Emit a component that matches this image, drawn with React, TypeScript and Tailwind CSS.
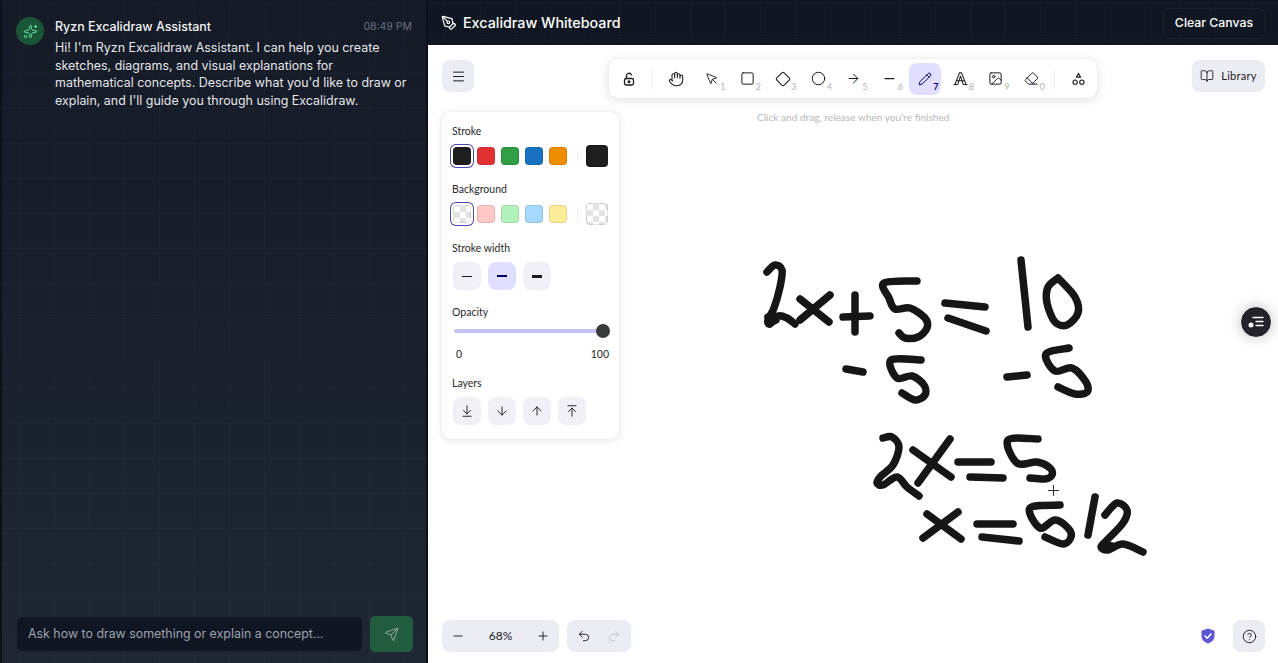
import React from 'react';
import {
  ArrowDown,
  ArrowDownToLine,
  ArrowRight,
  ArrowUp,
  ArrowUpToLine,
  BookOpen,
  Circle,
  CircleHelp,
  Diamond,
  Eraser,
  Hand,
  Image,
  Menu,
  Minus,
  MousePointer,
  PenTool,
  Pencil,
  Plus,
  Redo2,
  Send,
  Sparkles,
  Square,
  Undo2,
} from 'lucide-react';

type Pt = [number, number];

// handwriting strokes, in page coordinates
const STROKES: Pt[][] = [
  [[767, 272], [775, 265], [782, 270], [780, 287], [774, 308], [768, 320], [770, 324], [778, 316], [787, 318], [795, 324]],
  [[768, 317], [771, 322], [776, 320]],
  [[800, 320], [830, 295]],
  [[800, 299], [829, 322]],
  [[843, 317], [870, 316]],
  [[855, 295], [855, 332]],
  [[917, 281], [884, 283], [889, 298], [895, 309], [910, 308], [925, 318], [927, 328], [918, 337], [905, 338], [899, 333]],
  [[945, 303], [985, 307]],
  [[948, 318], [986, 331]],
  [[1021, 260], [1028, 327]],
  [[1058, 278], [1075, 297], [1078, 313], [1067, 325], [1055, 322], [1047, 303], [1048, 287], [1058, 278]],
  [[846, 369], [863, 372]],
  [[921, 360], [891, 360], [897, 378], [912, 376], [924, 385], [925, 395], [915, 400], [902, 393]],
  [[1007, 377], [1027, 375]],
  [[1069, 348], [1046, 354], [1055, 371], [1072, 368], [1086, 382], [1087, 392], [1075, 394], [1058, 387]],
  [[883, 438], [892, 437], [899, 447], [893, 465], [881, 476], [877, 483], [883, 485], [897, 477], [907, 487], [919, 496]],
  [[950, 439], [918, 483]],
  [[913, 450], [951, 477]],
  [[958, 462], [991, 462]],
  [[970, 477], [1003, 478]],
  [[1038, 439], [1008, 440], [1017, 463], [1037, 462], [1050, 468], [1052, 475], [1045, 479], [1030, 478]],
  [[958, 512], [923, 538]],
  [[927, 514], [961, 539]],
  [[977, 524], [1013, 524]],
  [[982, 537], [1019, 541]],
  [[1060, 505], [1030, 508], [1040, 528], [1055, 520], [1068, 528], [1071, 537], [1063, 544], [1045, 537]],
  [[1095, 497], [1088, 535]],
  [[1105, 515], [1117, 503], [1127, 510], [1123, 523], [1107, 540], [1101, 547], [1108, 550], [1123, 544], [1143, 552]],
  [[1103, 545], [1112, 546]],
];

// catmull-rom through the points, keeps the hand drawn look
function toPath(pts: Pt[]) {
  let d = `M${pts[0][0]} ${pts[0][1]}`;
  for (let i = 0; i < pts.length - 1; i++) {
    const p0 = pts[i - 1] ?? pts[i];
    const p1 = pts[i];
    const p2 = pts[i + 1];
    const p3 = pts[i + 2] ?? p2;
    const c1x = p1[0] + (p2[0] - p0[0]) / 6;
    const c1y = p1[1] + (p2[1] - p0[1]) / 6;
    const c2x = p2[0] - (p3[0] - p1[0]) / 6;
    const c2y = p2[1] - (p3[1] - p1[1]) / 6;
    d += ` C${c1x} ${c1y} ${c2x} ${c2y} ${p2[0]} ${p2[1]}`;
  }
  return d;
}

const LockIcon = () => (
  <svg width="14" height="14" viewBox="0 0 14 14" fill="none" stroke="currentColor" strokeWidth="1.3" strokeLinecap="round" strokeLinejoin="round">
    <rect x="2.500" y="6.500" width="9" height="6.500" rx="1.800" />
    <circle cx="7" cy="9.700" r="0.900" />
    <path d="M4.500 6.500V3.800a2.500 2.500 0 0 1 4.800-1" />
  </svg>
);

const TextIcon = () => (
  <svg width="15" height="15" viewBox="0 0 16 16" fill="none" stroke="currentColor" strokeWidth="1.1" strokeLinecap="round" strokeLinejoin="round">
    <path d="M2 14.500 7 1.800h2l5 12.700" />
    <path d="M5 14.500 8 5.500l3 9" />
    <path d="M4 10.500h8" />
    <path d="M1 14.500h3M12 14.500h3" />
  </svg>
);

const ShapesIcon = () => (
  <svg width="13" height="14" viewBox="0 0 14 14" fill="none" stroke="currentColor" strokeWidth="1.2" strokeLinejoin="round">
    <path d="M7 1 9.200 5H4.800z" />
    <circle cx="3.400" cy="10.400" r="2.300" />
    <circle cx="10.600" cy="10.400" r="2.300" />
  </svg>
);

const TOOLS: { icon: React.ReactNode; key?: string; active?: boolean }[] = [
  { icon: <Hand size={16} strokeWidth={1.6} /> },
  { icon: <MousePointer size={14} strokeWidth={1.6} />, key: '1' },
  { icon: <Square size={15} strokeWidth={1.6} />, key: '2' },
  { icon: <Diamond size={16} strokeWidth={1.6} />, key: '3' },
  { icon: <Circle size={15} strokeWidth={1.6} />, key: '4' },
  { icon: <ArrowRight size={15} strokeWidth={1.6} />, key: '5' },
  { icon: <Minus size={15} strokeWidth={2} />, key: '6' },
  { icon: <Pencil size={14} strokeWidth={1.7} />, key: '7', active: true },
  { icon: <TextIcon />, key: '8' },
  { icon: <Image size={15} strokeWidth={1.6} />, key: '9' },
  { icon: <Eraser size={15} strokeWidth={1.6} />, key: '0' },
];

const STROKE_COLORS = ['bg-[#1e1e1e]', 'bg-[#e03131]', 'bg-[#2f9e44]', 'bg-[#1971c2]', 'bg-[#f08c00]'];
const BG_COLORS = ['bg-[#ffc9c9]', 'bg-[#b2f2bb]', 'bg-[#a5d8ff]', 'bg-[#ffec99]'];

const checker = 'bg-[repeating-conic-gradient(#e3e3e3_0_25%,#ffffff_0_50%)] bg-[size:12px_12px]';

const Swatch = ({ className, selected }: { className: string; selected?: boolean }) => (
  <div className={`flex h-[22px] w-[22px] items-center justify-center rounded-[5px] ${selected ? 'ring-1 ring-[#4a47b1]' : ''}`}>
    <div className={`h-[18px] w-[18px] rounded-[4px] border border-black/10 ${className}`} />
  </div>
);

const SquareBtn = ({ children, active }: { children: React.ReactNode; active?: boolean }) => (
  <div className={`flex h-7 w-7 items-center justify-center rounded-lg ${active ? 'bg-[#e0dfff] text-[#030064]' : 'bg-[#f1f0f6] text-[#1b1b1f]'}`}>
    {children}
  </div>
);

const Label = ({ children }: { children: React.ReactNode }) => (
  <div className="text-[10.500px] leading-4 text-[#2a2a2e]">{children}</div>
);

export default function App() {
  return (
    <div className="flex h-screen w-full overflow-hidden bg-white font-['Inter',sans-serif]">
      {/* Chat side */}
      <aside className="flex w-[428px] shrink-0 flex-col border-x-2 border-l-[#0d1119] border-r-[#0b0f17] bg-[linear-gradient(rgba(255,255,255,0.025)_1px,transparent_1px),linear-gradient(90deg,rgba(255,255,255,0.025)_1px,transparent_1px),linear-gradient(180deg,#141a26,#1f2734)] bg-[size:35px_35px,35px_35px,100%_100%] bg-[position:17px_3px,17px_3px,0_0]">
        <div className="flex flex-1 gap-[10px] pl-[14px] pr-[14px] pt-[17px]">
          <div className="flex h-7 w-7 shrink-0 items-center justify-center rounded-full bg-[#1a5537] text-[#5fe39b]">
            <Sparkles size={15} strokeWidth={1.6} />
          </div>
          <div className="min-w-0 flex-1 pl-[1px]">
            <div className="mt-[1px] flex items-center justify-between">
              <span className="text-[12.450px] font-medium leading-[18px] text-[#f3f4f6]">Ryzn Excalidraw Assistant</span>
              <span className="text-[10.500px] leading-[18px] text-[#6b7280]">08:49 PM</span>
            </div>
            <p className="mt-[3px] text-[12.450px] leading-[17.600px] text-[#e5e7eb]">
              Hi! I'm Ryzn Excalidraw Assistant. I can help you create sketches, diagrams, and visual explanations for mathematical concepts. Describe what you'd like to draw or explain, and I'll guide you through using Excalidraw.
            </p>
          </div>
        </div>
        <div className="flex items-center gap-2 pb-[11px] pl-[15px] pr-[13px]">
          <div className="flex h-[34px] flex-1 items-center rounded-[5px] bg-[#111623] pl-[11px] text-[12.400px] text-[#9ca3af]">
            Ask how to draw something or explain a concept...
          </div>
          <button className="flex h-9 w-[43px] items-center justify-center rounded-[5px] bg-[#215c3e] text-[#93a89c]">
            <Send size={15} strokeWidth={1.6} />
          </button>
        </div>
      </aside>

      <main className="flex min-w-0 flex-1 flex-col">
        <header className="flex h-[45px] shrink-0 items-center justify-between bg-[#111722] bg-[linear-gradient(rgba(255,255,255,0.025)_1px,transparent_1px),linear-gradient(90deg,rgba(255,255,255,0.025)_1px,transparent_1px)] bg-[size:35px_35px] bg-[position:17px_3px] pl-[13px] pr-[13px]">
          <div className="mt-[1px] flex items-center gap-[6px] text-white">
            <PenTool size={16} strokeWidth={1.8} />
            <span className="text-[14.300px] font-medium">Excalidraw Whiteboard</span>
          </div>
          <button className="mt-[2px] h-[31px] w-[102px] rounded-[5px] border border-[#1c2330] text-[12.300px] font-medium text-white">Clear Canvas</button>
        </header>

        {/* Canvas */}
        <div className="relative flex min-h-0 flex-1 flex-col bg-white pb-[11px] pl-[14px] pr-[13px] pt-[15px] font-['Lato',sans-serif]">
          <svg className="pointer-events-none absolute left-[-428px] top-[-45px]" width="1278" height="663" fill="none">
            {STROKES.map((s, i) => (
              <path key={i} d={toPath(s)} stroke="#161616" strokeWidth="7.500" strokeLinecap="round" strokeLinejoin="round" />
            ))}
            <path d="M1053.500 485v11M1048 490.500h11" stroke="#333" strokeWidth="1" />
          </svg>

          <div className="relative flex items-start">
            <div className="flex h-8 w-8 items-center justify-center rounded-lg bg-[#ececf4] text-[#1b1b1f]">
              <Menu size={15} strokeWidth={1.6} />
            </div>
            <div className="ml-[135px] mt-[-1px] flex h-[39px] w-[488px] items-center rounded-lg bg-white pl-1 shadow-[0_2px_12px_rgba(0,0,0,0.12),0_0_1px_rgba(0,0,0,0.18)]">
              <div className="flex h-8 w-8 items-center justify-center text-[#1b1b1f]">
                <LockIcon />
              </div>
              <div className="mx-[7px] h-5 w-px bg-[#eeeef5]" />
              <div className="flex gap-[3.500px]">
                {TOOLS.map((t, i) => (
                  <div key={i} className={`relative flex h-8 w-8 items-center justify-center rounded-lg ${t.active ? 'bg-[#e0dfff] text-[#030064]' : 'text-[#1b1b1f]'}`}>
                    {t.icon}
                    {t.key && (
                      <span className={`absolute bottom-[2px] right-[2px] text-[9px] leading-3 ${t.active ? 'font-bold text-[#030064]' : 'text-[#b3b3b3]'}`}>{t.key}</span>
                    )}
                  </div>
                ))}
              </div>
              <div className="mx-[7px] h-5 w-px bg-[#eeeef5]" />
              <div className="flex h-8 w-8 items-center justify-center text-[#1b1b1f]">
                <ShapesIcon />
              </div>
            </div>
            <div className="ml-auto flex h-8 w-[73px] items-center justify-center gap-[7px] rounded-lg bg-[#ececf4] text-[11px] tracking-[0.3px] text-[#1b1b1f]">
              <BookOpen size={14} strokeWidth={1.5} />
              <span>Library</span>
            </div>
          </div>

          <div className="relative mt-[14px] flex flex-1 items-start">
            <div className="w-[177px] rounded-lg bg-white px-[10px] pb-[14px] pt-[11px] shadow-[0_1px_8px_rgba(0,0,0,0.1),0_0_1px_rgba(0,0,0,0.16)]">
              <Label>Stroke</Label>
              <div className="ml-[-1px] mt-[6px] flex items-center gap-[2px]">
                <Swatch className={STROKE_COLORS[0]} selected />
                {STROKE_COLORS.slice(1).map((c) => (
                  <Swatch key={c} className={c} />
                ))}
                <div className="mx-[6px] h-4 w-px bg-[#eeeef5]" />
                <div className="h-[22px] w-[22px] rounded-[4px] border border-black/10 bg-[#1e1e1e]" />
              </div>
              <div className="mt-[14px]">
                <Label>Background</Label>
              </div>
              <div className="ml-[-1px] mt-[6px] flex items-center gap-[2px]">
                <Swatch className={checker} selected />
                {BG_COLORS.map((c) => (
                  <Swatch key={c} className={c} />
                ))}
                <div className="mx-[6px] h-4 w-px bg-[#eeeef5]" />
                <div className={`h-[22px] w-[22px] rounded-[4px] border border-black/10 ${checker}`} />
              </div>
              <div className="mt-[15px]">
                <Label>Stroke width</Label>
              </div>
              <div className="ml-[1px] mt-[6px] flex gap-[7px]">
                <SquareBtn><div className="h-px w-[10px] bg-current" /></SquareBtn>
                <SquareBtn active><div className="h-[2px] w-[10px] bg-current" /></SquareBtn>
                <SquareBtn><div className="h-[3px] w-[10px] bg-current" /></SquareBtn>
              </div>
              <div className="mt-[14px]">
                <Label>Opacity</Label>
              </div>
              <div className="relative mt-[4px] h-[14px]">
                <div className="absolute left-[2px] right-[1px] top-[5px] h-1 rounded-full bg-[#c5c2f4]" />
                <div className="absolute right-[-1px] top-0 h-[14px] w-[14px] rounded-full bg-[#3a3a3a]" />
              </div>
              <div className="mt-[8px] flex justify-between pl-1 text-[10.500px] leading-4 text-[#2a2a2e]">
                <span>0</span>
                <span>100</span>
              </div>
              <div className="mt-[13px]">
                <Label>Layers</Label>
              </div>
              <div className="ml-[1px] mt-[6px] flex gap-[7px]">
                <SquareBtn><ArrowDownToLine size={14} strokeWidth={1.6} /></SquareBtn>
                <SquareBtn><ArrowDown size={14} strokeWidth={1.6} /></SquareBtn>
                <SquareBtn><ArrowUp size={14} strokeWidth={1.6} /></SquareBtn>
                <SquareBtn><ArrowUpToLine size={14} strokeWidth={1.6} /></SquareBtn>
              </div>
            </div>
            <div className="ml-[138px] mt-[-3px] text-[10.100px] leading-4 text-[#b8b8b8]">Click and drag, release when you're finished</div>
          </div>

          <div className="absolute right-[6px] top-[261px] flex h-8 w-8 items-center justify-center rounded-full border border-white bg-[#232329] shadow-[0_0_14px_rgba(0,0,0,0.22)]">
            <svg width="18" height="14" viewBox="0 0 18 14" fill="none" stroke="#fff" strokeWidth="1.300" strokeLinecap="round">
              <path d="M6 2.500h10M9 6.500h7M9 10.500h7" />
              <circle cx="4" cy="10" r="2.500" fill="#fff" stroke="none" />
            </svg>
          </div>

          <div className="relative flex items-center">
            <div className="flex h-8 w-[117px] items-center justify-between rounded-lg bg-[#ececf4] px-[9px] text-[#1b1b1f]">
              <Minus size={14} strokeWidth={1.6} />
              <span className="text-[12px]">68%</span>
              <Plus size={14} strokeWidth={1.6} />
            </div>
            <div className="ml-2 flex h-8 w-16 items-center justify-between rounded-lg bg-[#ececf4] px-[10px]">
              <Undo2 size={14} strokeWidth={1.6} className="text-[#1b1b1f]" />
              <Redo2 size={14} strokeWidth={1.6} className="text-[#c4c4cc]" />
            </div>
            <svg className="ml-auto mr-[18px]" width="14" height="16" viewBox="0 0 14 16">
              <path d="M7 0.500 13.500 2.700v5.300c0 3.700-2.800 6.300-6.500 7.500C3.300 14.300.5 11.700.5 8V2.700z" fill="#5b57d1" />
              <path d="M4 8l2.200 2.200L10 6" fill="none" stroke="#fff" strokeWidth="1.500" strokeLinecap="round" strokeLinejoin="round" />
            </svg>
            <div className="flex h-8 w-8 items-center justify-center rounded-lg bg-[#ececf4] text-[#1b1b1f]">
              <CircleHelp size={15} strokeWidth={1.5} />
            </div>
          </div>
        </div>
      </main>
    </div>
  );
}
